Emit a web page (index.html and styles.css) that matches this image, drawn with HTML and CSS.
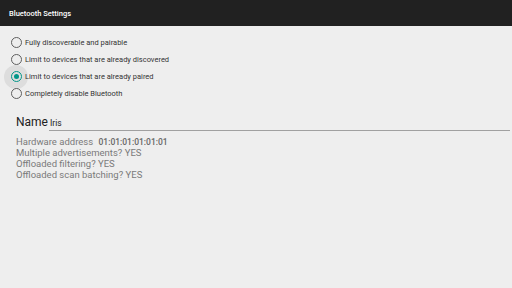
FILE: index.html
```html
<!DOCTYPE html>
<html>
<head>
<meta charset="utf-8">
<link rel="stylesheet" href="styles.css">
</head>
<body>
<header class="bar"><span class="bar-title">Bluetooth Settings</span></header>
<main class="content">
  <ul class="radios">
    <li class="radio"><span class="circle"></span><span class="label">Fully discoverable and pairable</span></li>
    <li class="radio"><span class="circle"></span><span class="label">Limit to devices that are already discovered</span></li>
    <li class="radio checked"><span class="halo"></span><span class="circle"><span class="dot"></span></span><span class="label">Limit to devices that are already paired</span></li>
    <li class="radio"><span class="circle"></span><span class="label">Completely disable Bluetooth</span></li>
  </ul>
  <div class="name-row">
    <span class="name-label">Name</span>
    <span class="name-field">Iris</span>
  </div>
  <div class="info">
    <div class="info-line">Hardware address <span class="addr">01:01:01:01:01:01</span></div>
    <div class="info-line">Multiple advertisements? YES</div>
    <div class="info-line">Offloaded filtering? YES</div>
    <div class="info-line">Offloaded scan batching? YES</div>
  </div>
</main>
</body>
</html>
```
FILE: styles.css
```css
html, body {
  margin: 0;
  padding: 0;
  background: #eeeeee;
  font-family: Roboto, "Noto Sans", sans-serif;
  width: 512px;
  height: 288px;
  overflow: hidden;
}
.bar {
  height: 26px;
  background: #212121;
  display: flex;
  align-items: center;
  padding-left: 9px;
}
.bar-title {
  color: #ffffff;
  font-size: 7.5px;
  font-weight: 500;
}
.content {
  padding: 8px 2px 0 0;
}
.radios {
  list-style: none;
  margin: 0;
  padding: 0;
}
.radio {
  position: relative;
  height: 17px;
  display: flex;
  align-items: center;
  padding-left: 11px;
}
.circle {
  position: relative;
  width: 11px;
  height: 11px;
  box-sizing: border-box;
  border: 1.3px solid #5f5f5f;
  border-radius: 50%;
  display: flex;
  align-items: center;
  justify-content: center;
  z-index: 1;
}
.checked .circle {
  border-color: #009688;
}
.dot {
  width: 5px;
  height: 5px;
  border-radius: 50%;
  background: #009688;
}
.halo {
  position: absolute;
  left: 4px;
  top: -3.5px;
  width: 24px;
  height: 24px;
  border-radius: 50%;
  background: #dddddd;
}
.label {
  position: relative;
  margin-left: 3px;
  font-size: 7.5px;
  color: #333333;
}
.name-row {
  display: flex;
  align-items: flex-end;
  margin: 12px 0 0 16px;
  height: 17px;
}
.name-label {
  font-size: 12px;
  color: #212121;
  line-height: 15px;
  padding-bottom: 1px;
}
.name-field {
  flex: 1;
  margin-left: 1px;
  font-size: 8.5px;
  color: #212121;
  border-bottom: 1px solid #a0a0a0;
  padding: 0 0 1px 1px;
  line-height: 11px;
}
.info {
  margin: 5px 0 0 16px;
  color: #7a7a7a;
  font-size: 9.5px;
  line-height: 11px;
}
.info-line {
  height: 11px;
}
.addr {
  margin-left: 3px;
  font-size: 8.5px;
  font-weight: 500;
  line-height: 11px;
  color: #666666;
}
```
